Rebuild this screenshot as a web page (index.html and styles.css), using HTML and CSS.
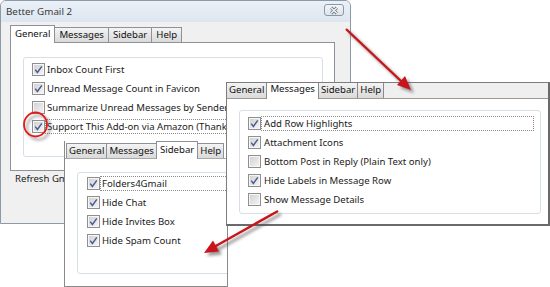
FILE: index.html
```html
<!DOCTYPE html>
<html>
<head>
<meta charset="utf-8">
<link rel="stylesheet" href="styles.css">
</head>
<body>
<div class="canvas">

  <section class="win main">
    <header class="titlebar">
      <span class="title">Better Gmail 2</span>
      <span class="close"><svg width="19" height="11" viewBox="0 0 19 11"><path d="M6.5 2.5 L12.5 8.5 M12.5 2.5 L6.5 8.5" stroke="#6f7b8a" stroke-width="3.2" fill="none"/><path d="M6.5 2.5 L12.5 8.5 M12.5 2.5 L6.5 8.5" stroke="#f4f6f8" stroke-width="1.4" fill="none"/></svg></span>
    </header>
    <div class="winbody">
      <nav class="tabs">
        <span class="tab sel">General</span><span class="tab">Messages</span><span class="tab">Sidebar</span><span class="tab">Help</span>
      </nav>
      <div class="panel">
        <div class="group">
          <div class="row"><span class="cb"><svg viewBox="0 0 11 11"><path d="M2.2 5.6 L4.4 8.4 L8.8 2.4" stroke="#4b5c93" stroke-width="1.5" fill="none"/></svg></span><span class="lbl">Inbox Count First</span></div>
          <div class="row"><span class="cb"><svg viewBox="0 0 11 11"><path d="M2.2 5.6 L4.4 8.4 L8.8 2.4" stroke="#4b5c93" stroke-width="1.5" fill="none"/></svg></span><span class="lbl">Unread Message Count in Favicon</span></div>
          <div class="row"><span class="cb"></span><span class="lbl">Summarize Unread Messages by Sender</span></div>
          <div class="row"><span class="cb"><svg viewBox="0 0 11 11"><path d="M2.2 5.6 L4.4 8.4 L8.8 2.4" stroke="#4b5c93" stroke-width="1.5" fill="none"/></svg></span><span class="lbl focus">Support This Add-on via Amazon (Thanks!)</span></div>
        </div>
      </div>
      <div class="refresh">Refresh Gmail every 5 minutes</div>
    </div>
  </section>

  <section class="win side">
    <nav class="tabs">
      <span class="tab">General</span><span class="tab">Messages</span><span class="tab sel">Sidebar</span><span class="tab">Help</span>
    </nav>
    <div class="panel">
      <div class="group">
        <div class="row"><span class="cb"><svg viewBox="0 0 11 11"><path d="M2.2 5.6 L4.4 8.4 L8.8 2.4" stroke="#4b5c93" stroke-width="1.5" fill="none"/></svg></span><span class="lbl focus">Folders4Gmail</span></div>
        <div class="row"><span class="cb"><svg viewBox="0 0 11 11"><path d="M2.2 5.6 L4.4 8.4 L8.8 2.4" stroke="#4b5c93" stroke-width="1.5" fill="none"/></svg></span><span class="lbl">Hide Chat</span></div>
        <div class="row"><span class="cb"><svg viewBox="0 0 11 11"><path d="M2.2 5.6 L4.4 8.4 L8.8 2.4" stroke="#4b5c93" stroke-width="1.5" fill="none"/></svg></span><span class="lbl">Hide Invites Box</span></div>
        <div class="row"><span class="cb"><svg viewBox="0 0 11 11"><path d="M2.2 5.6 L4.4 8.4 L8.8 2.4" stroke="#4b5c93" stroke-width="1.5" fill="none"/></svg></span><span class="lbl">Hide Spam Count</span></div>
      </div>
    </div>
  </section>

  <section class="win msgs">
    <nav class="tabs">
      <span class="tab">General</span><span class="tab sel">Messages</span><span class="tab">Sidebar</span><span class="tab">Help</span>
    </nav>
    <div class="panel">
      <div class="group">
        <div class="row"><span class="cb"><svg viewBox="0 0 11 11"><path d="M2.2 5.6 L4.4 8.4 L8.8 2.4" stroke="#4b5c93" stroke-width="1.5" fill="none"/></svg></span><span class="lbl focus">Add Row Highlights</span></div>
        <div class="row"><span class="cb"><svg viewBox="0 0 11 11"><path d="M2.2 5.6 L4.4 8.4 L8.8 2.4" stroke="#4b5c93" stroke-width="1.5" fill="none"/></svg></span><span class="lbl">Attachment Icons</span></div>
        <div class="row"><span class="cb"></span><span class="lbl">Bottom Post in Reply (Plain Text only)</span></div>
        <div class="row"><span class="cb"><svg viewBox="0 0 11 11"><path d="M2.2 5.6 L4.4 8.4 L8.8 2.4" stroke="#4b5c93" stroke-width="1.5" fill="none"/></svg></span><span class="lbl">Hide Labels in Message Row</span></div>
        <div class="row"><span class="cb"></span><span class="lbl">Show Message Details</span></div>
      </div>
    </div>
  </section>

  <svg class="marks" width="550" height="287" viewBox="0 0 550 287">
    <defs>
      <filter id="sh" x="-20%" y="-20%" width="140%" height="140%">
        <feGaussianBlur stdDeviation="1.4"/>
      </filter>
    </defs>
    <g opacity="0.55" transform="translate(3 3)" filter="url(#sh)">
      <ellipse cx="35.5" cy="124.5" rx="11.5" ry="12" fill="none" stroke="#555" stroke-width="2"/>
      <path d="M346 29 L402 82" stroke="#444" stroke-width="2.6"/>
      <path d="M411 90 L405 76 L397 85 Z" fill="#444"/>
      <path d="M278 211 L214 247" stroke="#444" stroke-width="2.6"/>
      <path d="M204 253 L213 240.5 L219 251.5 Z" fill="#444"/>
    </g>
    <ellipse cx="35.5" cy="124.5" rx="11.5" ry="12" fill="none" stroke="#e21b1b" stroke-width="1.8"/>
    <path d="M346 29 L402 82" stroke="#c8141b" stroke-width="2.4"/>
    <path d="M411 90 L405 76 L397 85 Z" fill="#c8141b"/>
    <path d="M278 211 L214 247" stroke="#c8141b" stroke-width="2.4"/>
    <path d="M204 253 L213 240.5 L219 251.5 Z" fill="#c8141b"/>
  </svg>

</div>
</body>
</html>
```
FILE: styles.css
```css
* { box-sizing: border-box; }
html, body { margin: 0; padding: 0; background: #fff; }
body { font-family: "Noto Sans", "Open Sans", sans-serif; font-size: 9.6px; color: #1b1b1b; }

.canvas { position: relative; width: 550px; height: 287px; overflow: hidden; background: #fff; }

.win { position: absolute; overflow: hidden; }

/* ---------- main dialog ---------- */
.main {
  left: 0; top: 0; width: 351px; height: 224px;
  border: 1px solid #8e99a6;
  border-radius: 6px 6px 0 0;
  background: #f0f0f0;
  display: flex; flex-direction: column;
  z-index: 1;
}
.titlebar {
  height: 21px; flex: none;
  display: flex; align-items: center; justify-content: space-between;
  padding: 0 6px 0 5px;
  background: linear-gradient(#eaf0f7, #dde6f0);
}
.title { font-size: 9.8px; color: #3a3a3a; line-height: 14px; }
.close {
  width: 20px; height: 12px; margin-top: -3px;
  border: 1px solid #8c97a6; border-radius: 3px;
  background: linear-gradient(#f3f5f8, #dfe4ea);
  display: flex; align-items: center; justify-content: center;
}
.close svg { display: block; }

.winbody { flex: 1; padding: 3px 15px 0 9px; display: flex; flex-direction: column; }

/* ---------- tabs ---------- */
.tabs { display: flex; align-items: flex-end; flex: none; height: 17px; position: relative; z-index: 2; }
.tab {
  height: 15px; line-height: 13px; padding: 0 4px;
  border: 1px solid #8d9199; border-bottom: none;
  background: linear-gradient(#f4f4f4, #e6e6e6 50%, #dadada);
  color: #111; white-space: nowrap;
}
.tab + .tab { margin-left: -1px; }
.tab.sel { height: 18px; margin-bottom: -1px; background: #fff; line-height: 15px; position: relative; z-index: 1; }

.panel {
  flex: none; height: 129px;
  border: 1px solid #8d9199; background: #fff;
  padding: 14px 11px 13px 12px;
  display: flex; flex-direction: column;
}
.group {
  flex: 1; border: 1px solid #d6dfe6; border-radius: 3px;
  padding-top: 2px;
  display: flex; flex-direction: column;
}
.row { height: 19px; flex: none; display: flex; align-items: center; padding-left: 8px; }
.cb {
  width: 13px; height: 13px; flex: none;
  border: 1px solid #8f8f8f;
  background: linear-gradient(135deg, #cfcfcf, #eeeeee 80%, #f8f8f8);
  box-shadow: inset 0 0 0 1px #f6f6f6;
  display: flex;
}
.cb svg { width: 11px; height: 11px; display: block; }
.lbl { border: 1px dotted transparent; padding: 0 2px 0 1px; line-height: 13px; white-space: nowrap; }
.lbl.focus { border-color: #8a8a8a; flex: 1; margin-right: 6px; }

.refresh { margin: 1px 0 0 5px; line-height: 14px; white-space: nowrap; }

/* ---------- messages panel ---------- */
.msgs {
  left: 226px; top: 82px; width: 324px; height: 144px;
  border: 1px solid #7d7d7d; border-right: 2px solid #6a6a6a; border-bottom: 2px solid #6a6a6a;
  background: #fff;
  display: flex; flex-direction: column;
  z-index: 3;
}
.msgs .tabs { height: 16px; background: #efefef; border-bottom: 1px solid #9a9a9a; align-items: flex-start; }
.msgs .tab { height: 15px; border-top: none; border-color: #8a8a8a; margin-left: -1px; padding: 0 2px; }
.msgs .tab.sel { height: 16px; line-height: 12px; margin-bottom: -1px; padding: 0 3px; }
.msgs .panel { flex: 1; height: auto; border: none; padding: 11px 7px 10px 12px; }
.msgs .group { padding-top: 3px; }
.msgs .lbl { padding-left: 2px; }

/* ---------- sidebar panel ---------- */
.side {
  left: 64px; top: 141px; width: 164px; height: 146px;
  border-left: 1px solid #8a8a8a; border-right: 1px solid #8a8a8a; border-bottom: 1px solid #8a8a8a;
  background: #fff;
  display: flex; flex-direction: column;
  z-index: 2;
}
.side .tabs { padding-left: 1px; }
.side .tab { padding: 0 2px; }
.side .tab.sel { padding: 0 3px; }
.side .panel { flex: 1; height: auto; border: none; border-top: 1px solid #a8a8a8; padding: 13px 0 12px 12px; margin-right: -40px; }
.side .group { padding-top: 1px; }
.side .row { padding-left: 9px; }

/* ---------- annotations ---------- */
.marks { position: absolute; left: 0; top: 0; z-index: 5; pointer-events: none; }
```
